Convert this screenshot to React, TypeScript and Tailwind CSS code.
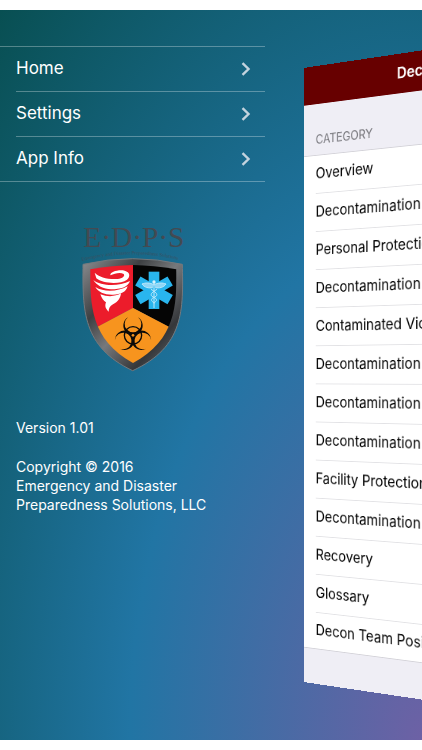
const menuItems = ["Home", "Settings", "App Info"];

const categories = [
  "Overview",
  "Decontamination",
  "Personal Protection",
  "Decontamination",
  "Contaminated Victims",
  "Decontamination",
  "Decontamination",
  "Decontamination",
  "Facility Protection",
  "Decontamination",
  "Recovery",
  "Glossary",
  "Decon Team Positions",
];

function Chevron() {
  return (
    <svg width="10" height="14" viewBox="0 0 10 14" fill="none" stroke="#c3d3de" strokeWidth="2.4" aria-hidden="true">
      <path d="M1.5 1.2 7.5 7l-6 5.8" />
    </svg>
  );
}

function Logo() {
  return (
    <svg viewBox="0 0 375 495" className="mx-auto mt-[33px] block w-[125px]" role="img" aria-label="EDPS">
      <defs>
        <linearGradient id="rim" x1="0" y1="0" x2="1" y2="1">
          <stop offset="0" stopColor="#8c8e91" />
          <stop offset="0.3" stopColor="#3e4043" />
          <stop offset="0.5" stopColor="#77797c" />
          <stop offset="0.75" stopColor="#35373a" />
          <stop offset="1" stopColor="#737578" />
        </linearGradient>
        <clipPath id="field">
          <path d="M61 163Q130 151 189 150Q250 151 319 163C320 270 318 375 189 444C62 375 60 270 61 163Z" />
        </clipPath>
        <path id="arc" d="M36 138Q188 98 340 138" />
      </defs>
      <text x="40" y="97" fontSize="88" fill="#434a52" className="font-['Liberation_Serif',serif]">
        E·D·P·S
      </text>
      <text fontSize="15" fill="#3b5060" className="font-['Liberation_Serif',serif]">
        <textPath href="#arc">Emergency and Disaster Preparedness Solutions</textPath>
      </text>
      <path
        d="M39 148Q115 131 188 131Q262 131 337 148C340 285 343 395 188 467C36 395 38 285 39 148Z"
        fill="url(#rim)"
        stroke="#75797d"
        strokeWidth="3"
      />
      <g clipPath="url(#field)">
        <path d="M40 130H189V279L40 358Z" fill="#ec1c2b" />
        <path d="M189 130H340V358L189 279Z" fill="#050505" />
        <path d="M189 279L40 358V470H340V358Z" fill="#f7941e" />
      </g>
      <g fill="#fff">
        <path d="M74 173C88 186 112 194 143 192C158 190 166 183 161 177C151 171 134 175 121 181C119 171 145 163 164 167C180 171 182 184 171 194C151 209 98 206 79 190Z" />
        <path d="M70 195C92 213 145 216 180 198C174 216 153 223 123 223C101 222 80 212 70 195Z" />
        <path d="M76 216C101 232 142 231 173 214C168 232 150 240 125 239C103 239 84 231 76 216Z" />
        <path d="M91 238C116 247 137 244 153 235C151 251 144 260 129 268C119 274 116 281 116 290C106 281 104 273 108 262C101 259 95 249 91 238Z" />
      </g>
      <g fill="#29b5ee">
        <rect x="236" y="170" width="32" height="112" />
        <rect x="236" y="170" width="32" height="112" transform="rotate(60 252 226)" />
        <rect x="236" y="170" width="32" height="112" transform="rotate(-60 252 226)" />
      </g>
      <g fill="none" stroke="#bce8fb" strokeWidth="3">
        <path d="M252 200V279" />
        <path d="M252 210C240 202 226 203 216 207C223 218 237 220 248 218M252 210C264 202 278 203 288 207C281 218 267 220 256 218" fill="#8fd6f6" />
        <path d="M243 223C265 235 265 243 250 248C240 254 245 260 254 264M261 223C239 235 239 243 254 248C264 254 259 260 250 264" />
      </g>
      <circle cx="252" cy="201" r="5" fill="#d9f3fd" />
      <g transform="translate(189 361)" fill="#0c0b09">
        <circle r="26" fill="none" stroke="#0c0b09" strokeWidth="4" />
        <path d="M-15 -54A29 29 0 1 0 15 -54A25 25 0 1 1 -15 -54Z" />
        <path d="M-15 -54A29 29 0 1 0 15 -54A25 25 0 1 1 -15 -54Z" transform="rotate(120)" />
        <path d="M-15 -54A29 29 0 1 0 15 -54A25 25 0 1 1 -15 -54Z" transform="rotate(240)" />
        <circle r="4" fill="#f7941e" />
      </g>
    </svg>
  );
}

function CategoryPanel() {
  return (
    <section className="h-[730px] w-full shrink-0 origin-left overflow-hidden bg-[#efeef5] transform-[perspective(1193px)_translateZ(-225px)_rotateY(-30deg)]">
      <header className="flex h-[45px] items-center bg-[#670000] pl-[122px]">
        <h1 className="text-[17px] font-semibold whitespace-nowrap text-white">Decontamination</h1>
      </header>
      <h2 className="flex h-[61px] items-end border-b border-[#d4d3d9] pb-2 pl-4 text-[14px] text-[#77777c]">CATEGORY</h2>
      <ul className="border-b border-[#d4d3d9] bg-white pl-4">
        {categories.map((name, i) => (
          <li key={i} className="h-[45px] border-b border-[#e2e2e5] last:h-[42px] last:border-b-0">
            <button type="button" className="h-full w-full text-left text-[17px] whitespace-nowrap text-black">
              {name}
            </button>
          </li>
        ))}
      </ul>
    </section>
  );
}

export default function App() {
  return (
    <div className="min-h-screen bg-white pt-[10px] pb-[11px] font-[Inter,sans-serif]">
      <main className="flex items-center overflow-hidden bg-[radial-gradient(ellipse_farthest-corner_at_100%_100%,#6d61a5_0%,#2175a4_49%,#084f52_100%)]">
        <aside className="mr-[39px] w-[265px] shrink-0 self-stretch pt-[36px]">
          <nav>
            <ul className="border-y border-white/30">
              {menuItems.map((item) => (
                <li key={item} className="group pl-4">
                  <a
                    href="#"
                    className="flex h-[45px] items-center justify-between border-b border-white/30 pr-[14px] text-[17px] text-white group-last:h-11 group-last:border-b-0"
                  >
                    {item}
                    <Chevron />
                  </a>
                </li>
              ))}
            </ul>
          </nav>
          <Logo />
          <div className="mt-[38px] pl-4 text-[14px] leading-[19px] text-white">
            <p>Version 1.01</p>
            <p className="mt-5">
              Copyright © 2016
              <br />
              Emergency and Disaster
              <br />
              Preparedness Solutions, LLC
            </p>
          </div>
        </aside>
        <CategoryPanel />
      </main>
    </div>
  );
}
